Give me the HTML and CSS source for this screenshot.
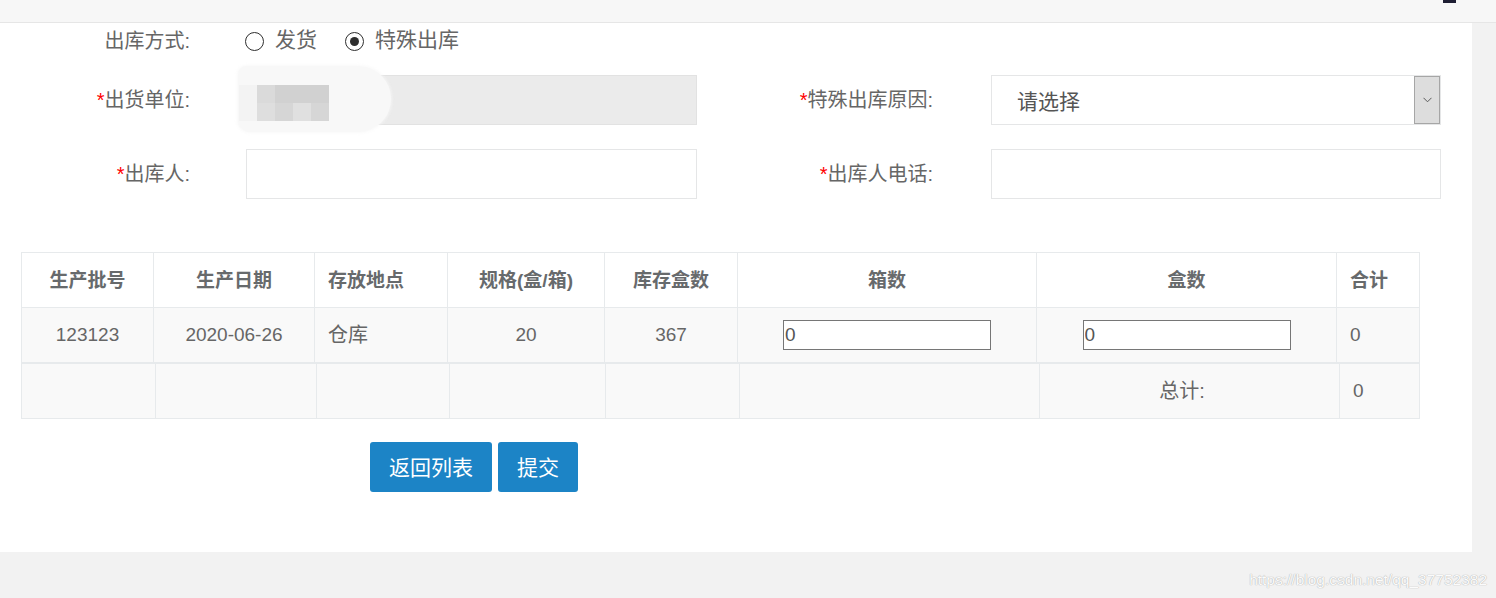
FILE: index.html
```html
<!DOCTYPE html>
<html lang="zh-CN">
<head>
<meta charset="utf-8">
<title>出库</title>
<link rel="stylesheet" href="styles.css">
</head>
<body>
<div class="topbar"><span class="topbar-mark"></span></div>
<div class="layout">
  <main class="panel">
    <div class="form">
      <div class="row row-first">
        <div class="field">
          <span class="lbl">出库方式:</span>
          <div class="radios">
            <span class="radio"></span><span class="radio-text">发货</span>
            <span class="radio checked"></span><span class="radio-text">特殊出库</span>
          </div>
        </div>
      </div>
      <div class="row row-second">
        <div class="field">
          <span class="lbl"><span class="req">*</span>出货单位:</span>
          <div class="ctrl ctrl-left disabled">
            <div class="mosaic">
              <div class="mosaic-row"><span class="t t0"></span><span class="t t1"></span><span class="t t2"></span><span class="t t2"></span><span class="t t2"></span></div>
              <div class="mosaic-row"><span class="t t0"></span><span class="t t3"></span><span class="t t4"></span><span class="t t5"></span><span class="t t4"></span></div>
            </div>
          </div>
        </div>
        <div class="field field-right">
          <span class="lbl"><span class="req">*</span>特殊出库原因:</span>
          <div class="ctrl ctrl-right select">
            <span class="select-text">请选择</span>
            <span class="select-btn">
              <svg width="9" height="6" viewBox="0 0 9 6"><path d="M0.5 0.8 L4.5 4.8 L8.5 0.8" fill="none" stroke="#5a5a5a" stroke-width="1"/></svg>
            </span>
          </div>
        </div>
      </div>
      <div class="row row-third">
        <div class="field">
          <span class="lbl"><span class="req">*</span>出库人:</span>
          <div class="ctrl ctrl-left"></div>
        </div>
        <div class="field field-right">
          <span class="lbl"><span class="req">*</span>出库人电话:</span>
          <div class="ctrl ctrl-right"></div>
        </div>
      </div>
    </div>

    <div class="tables">
      <table class="grid grid-main">
        <colgroup>
          <col style="width:132px"><col style="width:161px"><col style="width:133px"><col style="width:157px">
          <col style="width:133px"><col style="width:299px"><col style="width:300px"><col style="width:83px">
        </colgroup>
        <thead>
          <tr>
            <th>生产批号</th><th>生产日期</th><th class="left">存放地点</th><th>规格(盒/箱)</th>
            <th>库存盒数</th><th>箱数</th><th>盒数</th><th class="left">合计</th>
          </tr>
        </thead>
        <tbody>
          <tr>
            <td>123123</td><td>2020-06-26</td><td class="left cjk">仓库</td><td>20</td><td>367</td>
            <td><input class="num" type="text" value="0"></td>
            <td><input class="num" type="text" value="0"></td>
            <td class="left">0</td>
          </tr>
        </tbody>
      </table>
      <table class="grid grid-total">
        <colgroup>
          <col style="width:134px"><col style="width:161px"><col style="width:133px"><col style="width:156px">
          <col style="width:134px"><col style="width:300px"><col style="width:300px"><col style="width:80px">
        </colgroup>
        <tbody>
          <tr>
            <td></td><td></td><td></td><td></td><td></td><td></td>
            <td class="total-label">总计:</td><td class="left">0</td>
          </tr>
        </tbody>
      </table>
    </div>

    <div class="actions">
      <button class="btn" type="button">返回列表</button>
      <button class="btn" type="button">提交</button>
    </div>
  </main>
  <aside class="gutter"></aside>
</div>
<footer class="bottom"><span class="wm">https://blog.csdn.net/qq_37752382</span></footer>
</body>
</html>
```

FILE: styles.css
```css
* { box-sizing: border-box; }

html, body {
  margin: 0;
  padding: 0;
}

body {
  width: 1496px;
  height: 598px;
  overflow: hidden;
  background: #f2f2f2;
  font-family: "Liberation Sans", "Noto Sans CJK SC", sans-serif;
  color: #666;
}

.topbar {
  height: 23px;
  background: #f7f7f7;
  border-bottom: 1px solid #e6e6e6;
  display: flex;
  justify-content: flex-end;
  align-items: flex-start;
}

.topbar-mark {
  width: 13px;
  height: 3px;
  background: #1e1e33;
  margin-right: 40px;
}

.layout {
  display: flex;
  height: 529px;
}

.panel {
  width: 1472px;
  height: 529px;
  background: #fff;
}

.gutter {
  flex: 1;
  background: #f2f2f2;
}

/* form */
.row {
  display: flex;
  align-items: center;
}

.row-first { height: 36px; }
.row-second { height: 50px; margin-top: 16px; }
.row-third { height: 50px; margin-top: 24px; }

.field {
  display: flex;
  align-items: center;
  height: 100%;
}

.field-right { margin-left: 46px; }

.lbl {
  width: 190px;
  text-align: right;
  font-size: 20px;
  line-height: 24px;
  padding-bottom: 1px;
  color: #666;
  white-space: nowrap;
}

.req {
  color: #f00;
}

.radios {
  display: flex;
  align-items: center;
  margin-left: 55px;
}

.radio {
  width: 19px;
  height: 19px;
  border: 1.4px solid #2e2e2e;
  border-radius: 50%;
  display: flex;
  align-items: center;
  justify-content: center;
  background: #fff;
}

.radio.checked::after {
  content: "";
  width: 9px;
  height: 9px;
  border-radius: 50%;
  background: #2e2e2e;
}

.radio-text {
  font-size: 21px;
  line-height: 24px;
  padding-bottom: 2px;
  color: #666;
  margin-left: 11px;
  margin-right: 28px;
}

.ctrl {
  height: 50px;
  border: 1px solid #e5e6e7;
  background: #fff;
}

.ctrl-left {
  width: 451px;
  margin-left: 56px;
  position: relative;
}

.ctrl-right {
  width: 450px;
  margin-left: 58px;
}

.ctrl.disabled {
  background: #ebebeb;
  border-color: #e2e2e2;
}

/* mosaic blur covering the disabled value */
.mosaic {
  position: absolute;
  left: -9px;
  top: -10px;
  width: 153px;
  height: 66px;
  background: #f8f8f8;
  border-radius: 10px 40px 40px 14px;
  box-shadow: 0 0 3px 1px rgba(248, 248, 248, 0.8);
  padding: 19px 0 0 1px;
  display: flex;
  flex-direction: column;
}

.mosaic-row {
  display: flex;
  height: 18px;
}

.t { width: 18px; height: 18px; }
.t0 { background: #f3f3f3; }
.t1 { background: #dadada; }
.t2 { background: #d1d1d1; }
.t3 { background: #dedede; }
.t4 { background: #d6d6d6; }
.t5 { background: #e0e0e0; }

.select {
  display: flex;
  align-items: center;
  justify-content: space-between;
}

.select-text {
  font-size: 21px;
  color: #555;
  margin-left: 25px;
}

.select-btn {
  width: 26px;
  height: 100%;
  background: #dddddd;
  border: 1px solid #a6a6a6;
  display: flex;
  align-items: center;
  justify-content: center;
}

/* tables */
.tables {
  margin-top: 53px;
  margin-left: 21px;
  width: 1398px;
}

.grid {
  width: 1398px;
  table-layout: fixed;
  border-collapse: collapse;
  border: 1px solid #e7eaec;
}

.grid th,
.grid td {
  border: 1px solid #e7eaec;
  height: 55px;
  padding: 0 13px;
  text-align: center;
  vertical-align: middle;
  white-space: nowrap;
}

.grid th {
  font-size: 19px;
  font-weight: bold;
  color: #676a6c;
  background: #fff;
  padding-bottom: 3px;
}

.grid td {
  font-size: 19px;
  color: #666;
  background: #f9f9f9;
}

.grid td.cjk {
  font-size: 20px;
  padding-bottom: 3px;
}

.grid .left { text-align: left; }

.grid-total td { height: 55px; }

.grid td.total-label {
  padding-right: 28px;
  font-size: 20px;
  padding-bottom: 3px;
}

.num {
  width: 208px;
  height: 30px;
  border: 1px solid #767676;
  padding: 0 1px;
  font-family: "Liberation Sans", sans-serif;
  font-size: 19px;
  color: #555;
  background: #fff;
  display: block;
  margin: 0 auto;
}

/* actions */
.actions {
  display: flex;
  gap: 6px;
  margin-top: 23px;
  padding-left: 370px;
}

.btn {
  height: 50px;
  padding: 0 19px 2px;
  border: 0;
  border-radius: 3px;
  background: #1c84c6;
  color: #fff;
  font-family: "Liberation Sans", "Noto Sans CJK SC", sans-serif;
  font-size: 21px;
}

.bottom {
  height: 46px;
  display: flex;
  justify-content: flex-end;
  align-items: center;
  padding-right: 9px;
  padding-top: 10px;
}

.wm {
  font-size: 15.5px;
  color: #fbfbfb;
  text-shadow: 0 0 1px #a9a9a9, 0 0 1px #c4c4c4;
}
```
